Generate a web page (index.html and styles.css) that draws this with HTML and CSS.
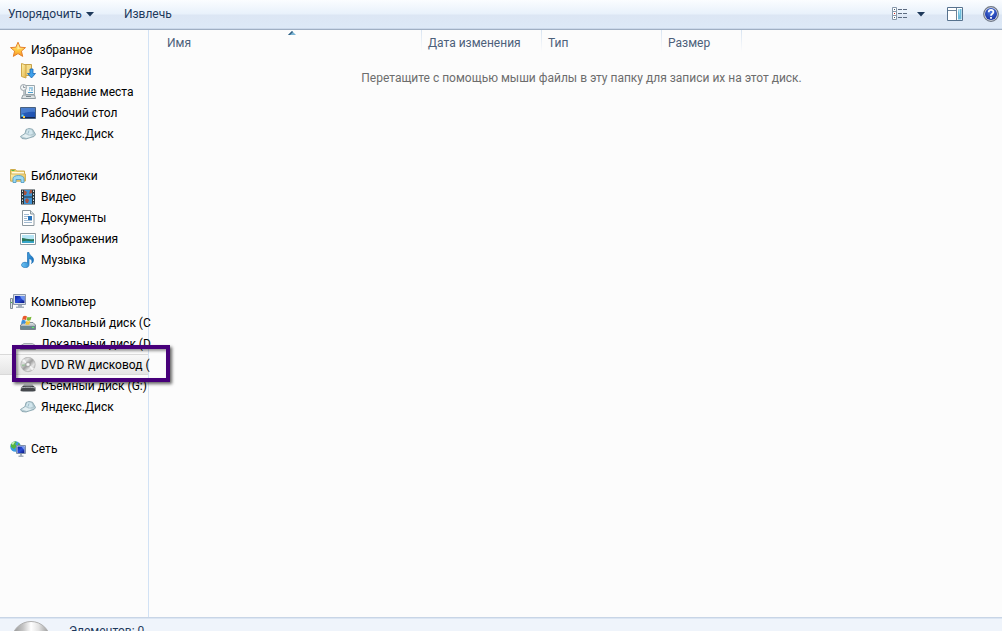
FILE: index.html
```html
<!DOCTYPE html>
<html lang="ru">
<head>
<meta charset="utf-8">
<title>DVD RW дисковод</title>
<link rel="stylesheet" href="styles.css">
</head>
<body>
<svg class="defs" aria-hidden="true">
  <defs>
    <linearGradient id="gold" x1="0" y1="0" x2="1" y2="1"><stop offset="0" stop-color="#fff3b0"/><stop offset="1" stop-color="#e3b548"/></linearGradient>
    <linearGradient id="star" x1="0" y1="0" x2="0" y2="1"><stop offset="0" stop-color="#fff09a"/><stop offset=".6" stop-color="#ffc63c"/><stop offset="1" stop-color="#f8912a"/></linearGradient>
    <linearGradient id="screen" x1="0" y1="0" x2="1" y2="1"><stop offset="0" stop-color="#0a1f9c"/><stop offset=".5" stop-color="#2b4fd8"/><stop offset="1" stop-color="#08137e"/></linearGradient>
    <linearGradient id="desk" x1="0" y1="0" x2="1" y2="1"><stop offset="0" stop-color="#2c62bd"/><stop offset="1" stop-color="#1c4fae"/></linearGradient>
    <linearGradient id="metal" x1="0" y1="0" x2="0" y2="1"><stop offset="0" stop-color="#e4e8ea"/><stop offset="1" stop-color="#7b868c"/></linearGradient>
    <linearGradient id="blue" x1="0" y1="0" x2="1" y2="0"><stop offset="0" stop-color="#6cc4f4"/><stop offset="1" stop-color="#1672c0"/></linearGradient>
    <linearGradient id="disc" x1="0" y1="0" x2="1" y2="1"><stop offset="0" stop-color="#b9b9b9"/><stop offset=".3" stop-color="#dedede"/><stop offset=".5" stop-color="#9c9c9c"/><stop offset=".7" stop-color="#e6e6e6"/><stop offset="1" stop-color="#a2a2a2"/></linearGradient>
    <linearGradient id="bigdisc" x1="0" y1="0" x2="1" y2="0"><stop offset="0" stop-color="#8e8e8e"/><stop offset=".3" stop-color="#c6c6c6"/><stop offset=".5" stop-color="#ffffff"/><stop offset=".7" stop-color="#e2e2e2"/><stop offset="1" stop-color="#8c8c8c"/></linearGradient>
    <radialGradient id="help" cx=".5" cy=".35" r=".7"><stop offset="0" stop-color="#4d7be4"/><stop offset="1" stop-color="#12299a"/></radialGradient>
    <symbol id="yadisk" viewBox="0 0 16 16">
      <path d="M.4 10.500 5 7.500 6 3.500l3-1 3.500.7 3.100 5.300-1.600 2-5 1.500-3 1-4-.5z" fill="#b3c9d1" stroke="#829faa" stroke-width=".8"/>
      <path d="m1.500 10.300 4-2.300 3 1.500 3 .3 3.500-1.300-5 2.600-3.500 1z" fill="#e4eff2"/>
      <path d="m6 7 1.500-3.700 4 .5L13 7.500 10 8.700z" fill="#d2e6ed"/>
      <path d="m8 7.500 1-3" stroke="#8fb0be" stroke-width=".8"/>
    </symbol>
  </defs>
</svg>
<div class="window">
  <header class="toolbar">
    <button class="command" type="button">Упорядочить <svg class="arrow" viewBox="0 0 8 5" aria-hidden="true"><path d="M0 0h8L4 4.500z" fill="#1e395b"/></svg></button>
    <button class="command" type="button">Извлечь</button>
    <div class="tools">
      <button class="tool view" type="button" aria-label="Изменить представление">
        <svg class="icon" viewBox="0 0 16 16"><g fill="#fff" stroke="#8797a9"><path d="M.5 1.500h4v4h-4zM.5 5.500h4v4h-4zM.5 9.500h4v4h-4z"/></g><path d="M2 3h1v1H2zM2 11h1v1H2z" fill="#395b74"/><path d="M2 7h1v1H2z" fill="#c22"/><path d="M6 3.500h4m1 0h4M6 7.500h4m1 0h4M6 11.500h4m1 0h4" stroke="#5c6b80"/></svg>
        <svg class="arrow" viewBox="0 0 8 5"><path d="M0 0h8L4 4.500z" fill="#1e395b"/></svg>
      </button>
      <button class="tool" type="button" aria-label="Показать область просмотра">
        <svg class="icon" viewBox="0 0 16 16"><path d="M.5 1.500h15v13H.5z" fill="#fff" stroke="#57728e"/><path d="M1 4.500h9M9.500 2v12" stroke="#6c8398"/><path d="M11 3h3.500v10.500H11z" fill="#6cbcdc"/><path d="M11 3h2v7z" fill="#b8e4f2"/></svg>
      </button>
      <button class="tool" type="button" aria-label="Справка">
        <svg class="icon" viewBox="0 0 16 16"><circle cx="8" cy="8" r="7.300" fill="#dfe2e8" stroke="#6e7684" stroke-width="1.200"/><circle cx="8" cy="8" r="6" fill="url(#help)"/><path d="M5.700 6.200c.1-3 4.800-3 4.700-.2C10.400 7.800 8 7.600 8 9.700M8 11v1.700" fill="none" stroke="#fff" stroke-width="1.800"/></svg>
      </button>
    </div>
  </header>

  <div class="content">
    <nav class="sidebar" aria-label="Область переходов">
      <ul class="group">
        <li><a class="node root" href="#favorites"><svg class="icon" viewBox="0 0 16 16"><path d="m8 .2 2.100 5 5.400.4-4.100 3.500 1.300 5.300L8 11.600l-4.700 2.800 1.300-5.300L.5 5.600l5.400-.4z" fill="url(#star)" stroke="#e5812c"/><path d="m8 2.500 1.200 3.700 3 .4-5 1z" fill="#fff6c0" opacity=".7"/></svg>Избранное</a></li>
        <li><a class="node" href="#downloads"><svg class="icon" viewBox="0 0 16 16"><path d="M5 1.500h6.500v11H5z" fill="#f5dc8a" stroke="#c7a14a"/><path d="M1.500.5 6 2v13l-4.500-1.500z" fill="url(#gold)" stroke="#cfa748"/><path d="M10 6h3v4.500h2.500L11.500 15l-4-4.500H10z" fill="#3ea0ea" stroke="#1b68b5" stroke-width=".8"/></svg>Загрузки</a></li>
        <li><a class="node" href="#recent"><svg class="icon" viewBox="0 0 16 16"><path d="M5.500 1.500h9v9h-9z" fill="#f4f7f8" stroke="#9aa7ad"/><path d="M9 4h4M9 6h1m1 0h2M8 8.500h5" stroke="#4a9dcc"/><circle cx="3.500" cy="3.500" r="3" fill="#f3f5f6" stroke="#9aa4aa"/><path d="M3.500 1.500v2h2" fill="none" stroke="#687680" stroke-width=".7"/><path d="M3 11h11.500l1 3.500H1.500z" fill="#dde2e4" stroke="#929da2"/><path d="M4 10.500V7M6 12.500h5" stroke="#7d898f"/></svg>Недавние места</a></li>
        <li><a class="node" href="#desktop"><svg class="icon" viewBox="0 0 16 16"><path d="M.5 2.500h15v11H.5z" fill="url(#desk)" stroke="#49617f"/><path d="M1 3h14v4C9 6 5 8 1 9z" fill="#5f93dc" opacity=".6"/><path d="M1 12.500h14" stroke="#14264d"/><path d="M1.500 9.500h2v2h-2z" fill="#68d9fa"/><path d="M3 11h2v2H3z" fill="#f8cf4e"/></svg>Рабочий стол</a></li>
        <li><a class="node" href="#yandex-favorite"><svg class="icon"><use href="#yadisk"/></svg>Яндекс.Диск</a></li>
      </ul>
      <ul class="group">
        <li><a class="node root" href="#libraries"><svg class="icon" viewBox="0 0 16 16"><path d="M.5 1.500h5l1 1.500h8v10H.5z" fill="#f3d677" stroke="#ceac4e"/><path d="M1.500 2.500h3" stroke="#58b947"/><path d="M2 4h12v3H2z" fill="#fffbe2"/><path d="M.5 6h15v7H.5z" fill="url(#gold)" stroke="#d4b35a"/><path d="M3 14.500V10.500c0-4 11-4 11 0v4h-3v-3H6v3z" fill="#9cd8f2" stroke="#4698c3" stroke-width=".8"/></svg>Библиотеки</a></li>
        <li><a class="node" href="#video"><svg class="icon" viewBox="0 0 16 16"><path d="M1 .5h14v15H1z" fill="#28343b"/><path d="M4 1h8v6.500H4zM4 8.500h8V15H4z" fill="#3d91d3"/><path d="m4 1 3 2-1 3H4zM10 1h2v3l-3 1zM7 9l2 2-1 3H6l-1-3z" fill="#a65543"/><path d="M2.500 1.500v13m11-13v13" stroke="#dce5e8" stroke-dasharray="1.500 1.500"/></svg>Видео</a></li>
        <li><a class="node" href="#documents"><svg class="icon" viewBox="0 0 16 16"><path d="M2.500.5h8l3.500 3.500v11.500H2.500z" fill="#fff" stroke="#8c989f"/><path d="M10.500.5V4H14" fill="#dce4e8" stroke="#8c989f"/><path d="M4 4.500h5M4 6.500h4M4 8.500h3M4 10.500h8M4 12.500h8" stroke="#a2bad0"/><path d="M8 6h4v4H8z" fill="#2873bb"/></svg>Документы</a></li>
        <li><a class="node" href="#pictures"><svg class="icon" viewBox="0 0 16 16"><path d="M.5 2.500h15v11H.5z" fill="#fff" stroke="#8b999f"/><path d="M2 4h12v8H2z" fill="#b6e5f5"/><path d="M2 7c4 0 6 2 12 1v4H2z" fill="#2b7758"/><path d="M2 10.500c5-1.500 8 .2 12-.5v2H2z" fill="#38a7cc"/></svg>Изображения</a></li>
        <li><a class="node" href="#music"><svg class="icon" viewBox="0 0 16 16"><path d="M7.500.5H9c0 3 5 4 4.500 8-.2 1.500-1 2.500-2 3 1.200-3-.2-4.500-2.500-5v6c0 3-3 3.500-5.500 2.800-3-1-2.500-5 1.500-5 1 0 1.800.2 2.500.7z" fill="url(#blue)" stroke="#1b6fb4" stroke-width=".7"/></svg>Музыка</a></li>
      </ul>
      <ul class="group">
        <li><a class="node root" href="#computer"><svg class="icon" viewBox="0 0 16 16"><path d="M.5 4.500h2v10h-2z" fill="#dfe4e8" stroke="#818d96"/><path d="M1 8.500h1" stroke="#42b549"/><path d="M3.500.500h12v10h-12z" fill="#d8dfe8" stroke="#8a97ab"/><path d="M5 2h9.500v7H5z" fill="url(#screen)"/><path d="M10 2h4.500v5C12 6 11 4 10 2z" fill="#6b92ef"/><path d="M8 11h4v1.500h2V14H6v-1.500h2z" fill="#a5b0bd"/></svg>Компьютер</a></li>
        <li><a class="node" href="#disk-c"><svg class="icon" viewBox="0 0 16 16"><path d="m2 9 2-1.500h9L15.500 10v4.500H.5V10z" fill="url(#metal)" stroke="#68757c" stroke-width=".8"/><path d="M1 11h14v3H1z" fill="#6d8790"/><path d="M12 12h2v1h-2z" fill="#5ff265"/><path d="M3 1.500C4.500.3 6 .8 7 1.500L6 5c-1.500-.8-3-.6-4 0z" fill="#e8592b"/><path d="M7.500 1.800c1.500.8 3 .5 4 0l-1 3.500c-1.500.7-2.500.5-4 0z" fill="#7cba39"/><path d="M1.800 5.500c1.500-.7 2.700-.5 4 .2L5 9C3.500 8.200 2 8.500 1 9z" fill="#3c8fdb"/><path d="M6.300 6c1.500.6 2.700.5 4 0l-1 3.500c-1.500.5-2.700.4-4-.2z" fill="#f5c338"/></svg>Локальный диск (C</a></li>
        <li><a class="node" href="#disk-d"><svg class="icon" viewBox="0 0 16 16"><path d="M1 9.500 4 7.500h8.500L15.500 9.500v4H.5z" fill="url(#metal)" stroke="#919aa0" stroke-width=".8"/></svg>Локальный диск (D</a></li>
        <li class="marked"><a class="node selected" href="#dvd" aria-current="page"><svg class="icon" viewBox="0 0 16 16"><circle cx="8" cy="7.500" r="7.200" fill="url(#disc)" stroke="#a4a4a4" stroke-width=".6"/><path d="M8 7.500 2 4l2-2zM8 7.500l6 4-2 2z" fill="#f5f5f5"/><path d="m8 7.500-6.500 0 .8 2z" fill="#9ac29b"/><circle cx="8" cy="7.500" r="2.300" fill="#ddd" stroke="#888" stroke-width=".6"/><circle cx="8" cy="7.500" r=".9" fill="#fff"/></svg>DVD RW дисковод (</a><span class="frame" aria-hidden="true"></span></li>
        <li><a class="node" href="#disk-g"><svg class="icon" viewBox="0 0 16 16"><path d="m2.500 8.500 1.500-2h8.500l1.500 2z" fill="#9ba1a5"/><path d="M1 9.500 3 8h10.500l2 1.500V13c-1 1-14 1-15 0z" fill="#45484c"/><path d="M1 10c2-1 12-1 14 0" fill="none" stroke="#b8bcc0"/><path d="M3 13h10v1H3z" fill="#9da1a5"/></svg>Съемный диск (G:)</a></li>
        <li><a class="node" href="#yandex-computer"><svg class="icon"><use href="#yadisk"/></svg>Яндекс.Диск</a></li>
      </ul>
      <ul class="group">
        <li><a class="node root" href="#network"><svg class="icon" viewBox="0 0 16 16"><circle cx="5.500" cy="5.500" r="5.300" fill="#3b9be0"/><path d="M1 3c2-3 5-3 6-2L5 3l2 2-3 3-3-2zM8 2l2 1v2L8 6z" fill="#55b53f"/><path d="M1 2.500C2 1 4 .5 5 1L3 4z" fill="#c4eeb4"/><path d="M6.500 4.500h9v8h-9z" fill="#d7e0ec" stroke="#8190a8"/><path d="M7.500 5.500h7V12h-7z" fill="url(#screen)"/><path d="M11.500 5.500h3v4z" fill="#7a9df0"/><path d="M10 13h2v1.500h1.500V16h-5v-1.500H10z" fill="#a1adba"/></svg>Сеть</a></li>
      </ul>
    </nav>

    <main class="files">
      <table class="list">
        <colgroup><col class="col-name"><col class="col-date"><col class="col-type"><col class="col-size"><col></colgroup>
        <thead>
          <tr><th scope="col" aria-sort="ascending">Имя<svg class="sort" viewBox="0 0 8 4" aria-hidden="true"><path d="M0 4 4 0l4 4z" fill="#79b4d4"/><path d="M0 4 4 0l1 1-3 3z" fill="#345f80"/></svg></th><th scope="col">Дата изменения</th><th scope="col">Тип</th><th scope="col">Размер</th><td></td></tr>
        </thead>
        <tbody>
          <tr><td class="empty" colspan="5">Перетащите с помощью мыши файлы в эту папку для записи их на этот диск.</td></tr>
        </tbody>
      </table>
    </main>
  </div>

  <footer class="status">
    <svg class="big-disc" viewBox="0 0 40 40" aria-hidden="true"><circle cx="20" cy="20" r="19.500" fill="url(#bigdisc)" stroke="#b0b0b0"/></svg>
    <span>Элементов: 0</span>
  </footer>
</div>
</body>
</html>
```
FILE: styles.css
```css
* {
  box-sizing: border-box;
}

body {
  margin: 0;
  font: 12px/20px Roboto, "Open Sans", sans-serif;
  color: #000;
  background: #fcfcfc;
}

.defs {
  position: absolute;
  width: 0;
  height: 0;
}

.window {
  display: flex;
  flex-direction: column;
  height: 100vh;
  overflow: hidden;
}

.toolbar {
  display: flex;
  flex: none;
  align-items: center;
  gap: 30px;
  height: 30px;
  padding: 0 3px 1px 8px;
  border-bottom: 1px solid #a0afc3;
  box-shadow: inset 0 -1px #cbd8ea;
  background: linear-gradient(#fbfdff 0, #e8f1fb 14px, #dce6f4 15px, #dde9f7 100%);
}

button {
  display: flex;
  align-items: center;
  padding: 0;
  border: 0;
  background: none;
  font: inherit;
  color: #1e395b;
}

.command {
  gap: 4px;
}

.arrow {
  width: 8px;
  height: 5px;
}

.icon {
  flex: none;
  width: 16px;
  height: 16px;
}

.tools {
  display: flex;
  gap: 20px;
  margin-left: auto;
}

.view {
  gap: 9px;
  padding-right: 2px;
}

.content {
  display: flex;
  flex: 1;
  min-height: 0;
}

.sidebar {
  position: relative;
  z-index: 1;
  display: flex;
  flex: none;
  flex-direction: column;
  gap: 21px;
  width: 149px;
  padding-top: 9px;
  border-right: 1px solid #d2e2f5;
}

.group {
  margin: 0;
  padding: 0;
  list-style: none;
}

.node {
  display: flex;
  align-items: center;
  gap: 5px;
  height: 21px;
  padding-left: 20px;
  color: #000;
  white-space: nowrap;
  text-decoration: none;
}

.root {
  padding-left: 10px;
}

.selected {
  border: solid #d9d9d9;
  border-width: 1px 0;
  background: linear-gradient(#f8f8f8, #e5e5e5);
}

.marked {
  position: relative;
}

.frame {
  position: absolute;
  inset: -9px -22px -7px 12px;
  z-index: 1;
  border: 4px solid #47007a;
  box-shadow: 2px 2px 3px #0009, inset 2px 2px 3px #0006;
  pointer-events: none;
}

.files {
  flex: 1;
  min-width: 0;
  padding-left: 12px;
}

.list {
  width: 100%;
  table-layout: fixed;
  border-collapse: collapse;
}

.col-name {
  width: 261px;
}

.col-date,
.col-type {
  width: 120px;
}

.col-size {
  width: 80px;
}

th {
  position: relative;
  height: 26px;
  padding: 0 6px;
  background: linear-gradient(#d8e4f1, #fcfcfc) right top / 1px 22px no-repeat;
  font-weight: 400;
  text-align: left;
  color: #4c607a;
}

.sort {
  position: absolute;
  top: 1px;
  left: 50%;
  width: 8px;
  height: 4px;
  margin-left: -4px;
}

.empty {
  padding: 12px 0;
  text-align: center;
  color: #6d6d6d;
}

.status {
  display: flex;
  flex: none;
  gap: 18px;
  height: 14px;
  padding: 3px 11px 0;
  overflow: hidden;
  border-top: 1px solid #c8d5e6;
  box-shadow: inset 0 1px #dce6f3;
  background: #eff4fb;
  color: #1e395b;
}

.big-disc {
  flex: none;
  width: 40px;
  height: 40px;
}
```
